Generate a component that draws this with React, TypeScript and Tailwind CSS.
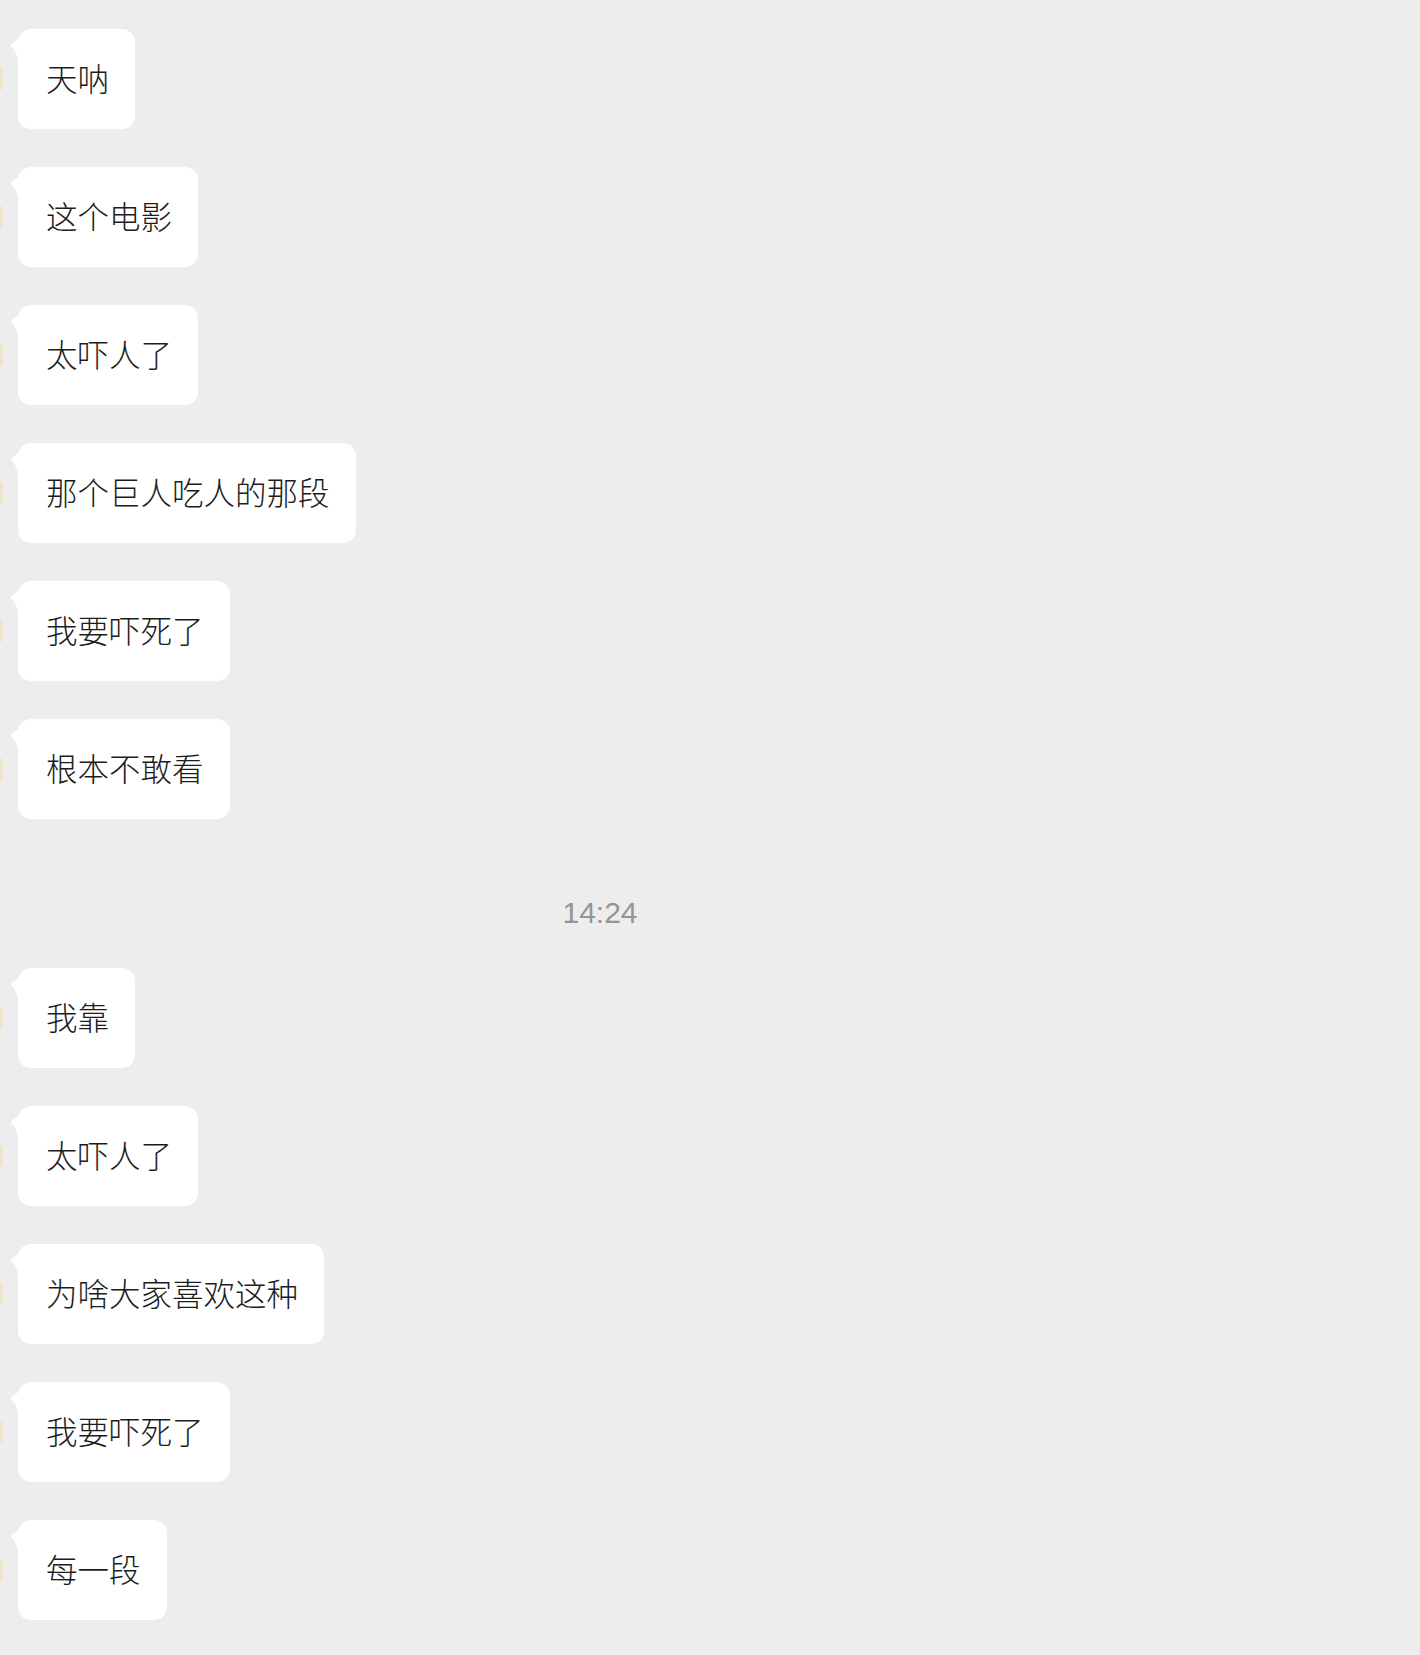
import React from "react"

const firstBatch = ["天呐", "这个电影", "太吓人了", "那个巨人吃人的那段", "我要吓死了", "根本不敢看"]
const secondBatch = ["我靠", "太吓人了", "为啥大家喜欢这种", "我要吓死了", "每一段"]

const Bubble = ({ text }: { text: string }) => {
    return (
        <div className="flex items-center mb-[38px]">
            <div className="w-[3px] h-[22px] bg-[#eee3cc] rounded-r-full mr-[15px]"></div>
            <div className="relative">
                <svg className="absolute left-[-8px] top-[8px]" width="10" height="24" viewBox="0 0 10 24">
                    <path d="M10 1 L2 6.5 Q0 8 1.5 9.5 Q6.5 14 8 23 L10 23 Z" fill="#ffffff" />
                </svg>
                <div
                    className="relative bg-white rounded-[13px] h-[100px] pl-[28px] pr-[26px] pb-[2px] flex items-center text-[31.5px] font-light text-[#1c1c1c] whitespace-nowrap"
                    style={{ fontFamily: '"Noto Sans CJK SC", "Noto Sans", sans-serif' }}
                >
                    {text}
                </div>
            </div>
        </div>
    )
}

const App = () => {
    return (
        <div className="w-full min-h-[1655px] bg-[#ededed] pt-[29px] overflow-hidden">
            {firstBatch.map((t, i) => <Bubble key={'a' + i} text={t} />)}
            <div className="w-[1200px] flex justify-center pt-[36px] pb-[35px]">
                <span className="text-[30px] leading-[40px] text-[#959595]" style={{ fontFamily: '"Liberation Sans", Arial, sans-serif' }}>14:24</span>
            </div>
            {secondBatch.map((t, i) => <Bubble key={'b' + i} text={t} />)}
        </div>
    )
}

export default App
